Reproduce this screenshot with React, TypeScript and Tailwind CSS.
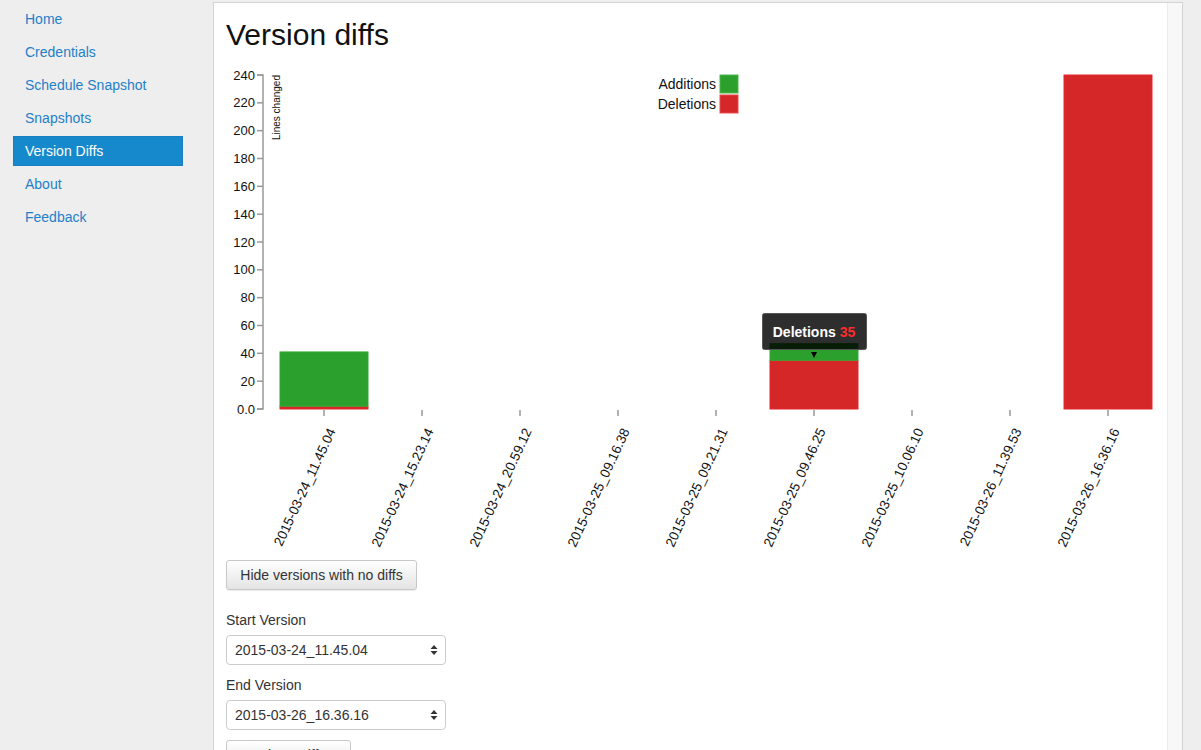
import React from "react";

const navItems = [
  "Home",
  "Credentials",
  "Schedule Snapshot",
  "Snapshots",
  "Version Diffs",
  "About",
  "Feedback",
];

const versions = [
  { name: "2015-03-24_11.45.04", add: 39, del: 2 },
  { name: "2015-03-24_15.23.14", add: 0, del: 0 },
  { name: "2015-03-24_20.59.12", add: 0, del: 0 },
  { name: "2015-03-25_09.16.38", add: 0, del: 0 },
  { name: "2015-03-25_09.21.31", add: 0, del: 0 },
  { name: "2015-03-25_09.46.25", add: 12, del: 35 },
  { name: "2015-03-25_10.06.10", add: 0, del: 0 },
  { name: "2015-03-26_11.39.53", add: 0, del: 0 },
  { name: "2015-03-26_16.36.16", add: 0, del: 240 },
];

const GREEN = "#2ca02c";
const RED = "#d62728";

// chart coords are page coords (viewBox offset)
const y = (v: number) => 409 - (v * 334) / 240;
const STEP = 98;
const X0 = 280;
const BAR_W = 88;

const Chart = () => {
  const ticks = [0, 20, 40, 60, 80, 100, 120, 140, 160, 180, 200, 220, 240];
  return (
    <svg
      className="block"
      width={941}
      height={500}
      viewBox="226 53 941 500"
      style={{ fontFamily: "'Liberation Sans', Arial, sans-serif" }}
    >
      {/* y axis */}
      <path d="M257,75H263V409H257" fill="none" stroke="#999" strokeWidth={1.5} />
      {ticks.map((t) => (
        <g key={t}>
          <line x1={257} x2={263} y1={y(t)} y2={y(t)} stroke="#999" strokeWidth={1.5} />
          <text x={255} y={y(t)} dy="0.35em" textAnchor="end" fontSize={13} fill="#111">
            {t === 0 ? "0.0" : t}
          </text>
        </g>
      ))}
      <text transform="translate(280,75) rotate(-90)" textAnchor="end" fontSize={10} fill="#111">
        Lines changed
      </text>

      {/* bars */}
      {versions.map((v, i) => {
        const x = X0 + i * STEP;
        const delTop = y(v.del);
        const addTop = y(v.del + v.add);
        return (
          <g key={v.name}>
            {v.del > 0 && (
              <rect x={x} y={delTop} width={BAR_W} height={409 - delTop} fill={RED} stroke="#e4262d" strokeWidth={1} />
            )}
            {v.add > 0 && (
              <rect x={x} y={addTop} width={BAR_W} height={delTop - addTop} fill={GREEN} stroke="#35a835" strokeWidth={1} />
            )}
          </g>
        );
      })}

      {/* x axis ticks + labels */}
      {versions.map((v, i) => {
        const cx = X0 + BAR_W / 2 + i * STEP;
        return (
          <g key={v.name}>
            <line x1={cx} x2={cx} y1={410} y2={416} stroke="#999" strokeWidth={1.5} />
            <text
              transform={`translate(${cx + 12},431) rotate(-65)`}
              textAnchor="end"
              fontSize={13.5}
              fill="#111"
            >
              {v.name}
            </text>
          </g>
        );
      })}

      {/* legend */}
      <text x={716} y={89} textAnchor="end" fontSize={14} fill="#111">
        Additions
      </text>
      <rect x={720} y={75} width={18} height={18} fill={GREEN} stroke="#4cb64c" strokeWidth={1} />
      <text x={716} y={109} textAnchor="end" fontSize={14} fill="#111">
        Deletions
      </text>
      <rect x={720} y={95} width={18} height={18} fill={RED} stroke="#e84a4f" strokeWidth={1} />

      {/* tooltip */}
      <rect x={762.5} y={313.5} width={104} height={36} rx={2} fill="rgba(0,0,0,0.82)" stroke="#555" strokeWidth={1} />
      <text x={814} y={337} textAnchor="middle" fontSize={14} fontWeight={700} fill="#fff">
        Deletions <tspan fill="#ff2a2a">35</tspan>
      </text>
      <polygon points="811,352 817,352 814,358" fill="#000" />
    </svg>
  );
};

const UpDown = () => (
  <svg width="8" height="12" viewBox="0 0 8 12">
    <polygon points="4,1 7.5,5 0.5,5" fill="#333" />
    <polygon points="0.5,7 7.5,7 4,11" fill="#333" />
  </svg>
);

const FakeSelect = ({ value }: { value: string }) => (
  <div className="mt-[5px] flex h-[30px] w-[220px] items-center justify-between rounded-[4px] border border-[#cccccc] bg-white pl-[8px] pr-[7px] text-[14px] text-[#333]">
    <span>{value}</span>
    <UpDown />
  </div>
);

export default function App() {
  return (
    <div className="flex h-[750px] overflow-hidden bg-[#eeeeee] font-['Liberation_Sans',Arial,sans-serif]">
      <nav className="flex w-[213px] shrink-0 flex-col gap-[3px] pl-[13px] pt-[4px]">
        {navItems.map((item) =>
          item === "Version Diffs" ? (
            <div
              key={item}
              className="h-[30px] w-[170px] border border-[#1a7fc0] bg-[#1589cb] pl-[11px] text-[14px] leading-[28px] text-white"
            >
              {item}
            </div>
          ) : (
            <div key={item} className="h-[30px] w-[170px] pl-[12px] text-[14px] leading-[30px] text-[#1f80c8]">
              {item}
            </div>
          )
        )}
      </nav>

      <div className="mt-[2px] flex h-[800px] w-[970px] shrink-0 border-l border-r border-t border-[#d4d4d4] bg-white">
        <div className="flex-1 pl-[12px]">
          <h1 className="mt-[14px] text-[30px] font-normal leading-[36px] text-[#111]">Version diffs</h1>
          <Chart />
          <button className="mt-[7px] block h-[30px] w-[191px] rounded-[3px] border border-[#c8c8c8] bg-gradient-to-b from-white to-[#e4e4e4] text-[14px] text-[#333] shadow-[0_1px_1px_rgba(0,0,0,0.08)]">
            Hide versions with no diffs
          </button>
          <div className="mt-[20px] text-[14px] leading-[20px] text-[#333]">Start Version</div>
          <FakeSelect value="2015-03-24_11.45.04" />
          <div className="mt-[10px] text-[14px] leading-[20px] text-[#333]">End Version</div>
          <FakeSelect value="2015-03-26_16.36.16" />
          <button className="mt-[10px] block h-[30px] w-[125px] rounded-[3px] border border-[#c8c8c8] bg-gradient-to-b from-white to-[#e4e4e4] text-[14px] text-[#333]">
            Show Diff
          </button>
        </div>
        <div className="w-[15px] shrink-0 border-l border-[#ececec] bg-[#f8f8f8]" />
      </div>
    </div>
  );
}
